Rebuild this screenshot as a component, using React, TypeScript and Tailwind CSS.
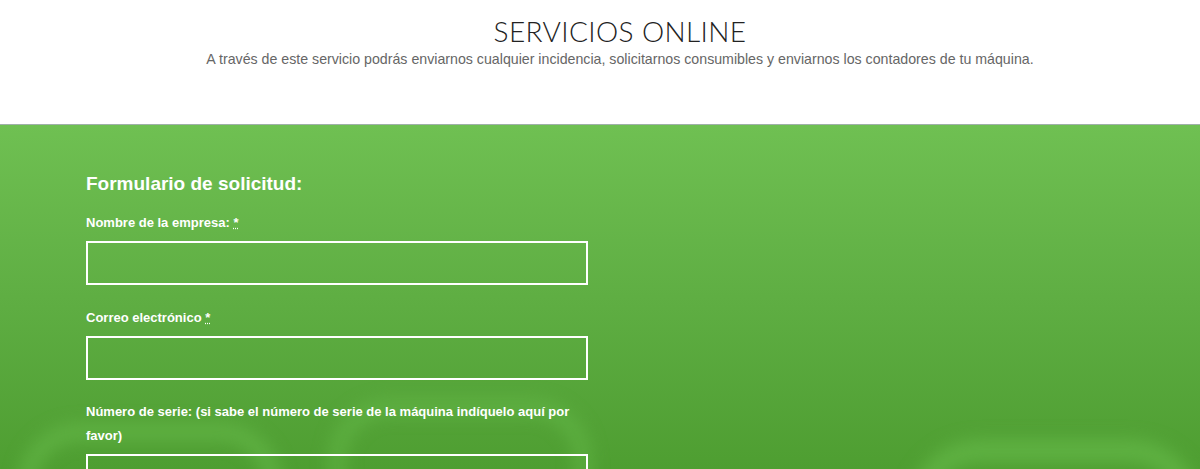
import React from 'react';

const fields = [
  { label: 'Nombre de la empresa:', required: true, gap: 'mt-0' },
  { label: 'Correo electrónico', required: true, gap: 'mt-[21px]' },
  { label: 'Número de serie: (si sabe el número de serie de la máquina indíquelo aquí por favor)', required: false, gap: 'mt-[20px]' },
];

export default function App() {
  return (
    <div className="flex min-h-[469px] flex-col bg-white font-['Liberation_Sans',Arial,sans-serif]">
      {/* Cabecera */}
      <div className="flex h-[124px] flex-col items-center pl-[40px] pt-[14px] text-center">
        <h1 className="font-['Lato','Open_Sans',sans-serif] text-[28px] font-light leading-[34px] tracking-[0.4px] text-[#222]">
          SERVICIOS ONLINE
        </h1>
        <p className="mt-[1px] text-[14.2px] leading-[20px] text-[#666]">
          A través de este servicio podrás enviarnos cualquier incidencia, solicitarnos consumibles y enviarnos los contadores de tu máquina.
        </p>
      </div>

      {/* Zona del formulario */}
      <div className="relative h-[345px] overflow-hidden border-t border-[#9fb0a8] bg-gradient-to-b from-[#6fc052] via-[#5fae43] to-[#4e9e31]">
        {/* brillos decorativos */}
        <div className="pointer-events-none absolute left-[20px] top-[300px] h-[200px] w-[260px] rounded-[60px] border-[14px] border-[#6cc250]/60 blur-[9px]" />
        <div className="pointer-events-none absolute left-[330px] top-[275px] h-[220px] w-[260px] rounded-[60px] border-[14px] border-[#6cc250]/50 blur-[9px]" />
        <div className="pointer-events-none absolute left-[910px] top-[318px] h-[200px] w-[290px] rounded-[70px] border-[16px] border-[#6cc250]/75 blur-[10px]" />

        <form className="relative flex flex-col px-[86px] pt-[45px] text-white">
          <h2 className="mb-[13px] text-[19px] font-bold leading-[28px]">Formulario de solicitud:</h2>
          {fields.map(f => (
            <div key={f.label} className={`flex w-[502px] flex-col gap-[6px] ${f.gap}`}>
              <label className="text-[13px] font-bold leading-[24px]">
                {f.label}
                {f.required && (
                  <>
                    {' '}
                    <abbr title="obligatorio" className="underline decoration-dotted">*</abbr>
                  </>
                )}
              </label>
              <input
                type="text"
                className="h-[44px] w-full border-2 border-white bg-transparent px-3 text-[14px] text-white outline-none"
              />
            </div>
          ))}
        </form>
      </div>
    </div>
  );
}
